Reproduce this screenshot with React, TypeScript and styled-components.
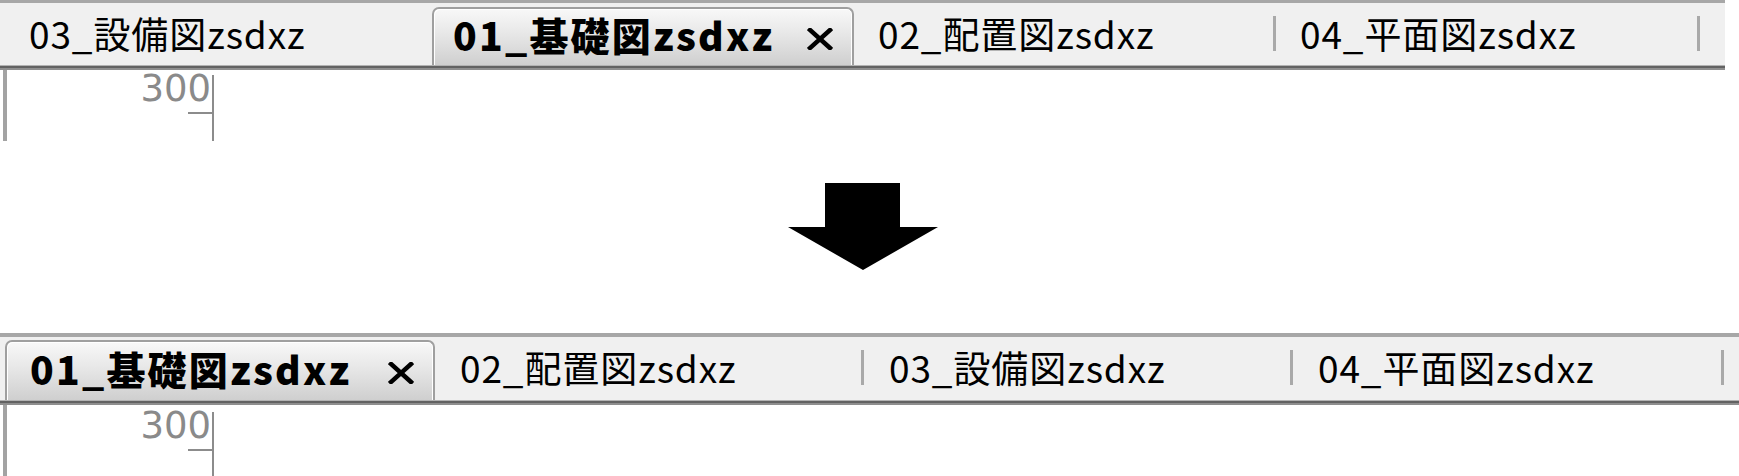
import React from "react";
import styled, { createGlobalStyle, css } from "styled-components";

const GlobalStyle = createGlobalStyle`
  html, body { margin: 0; padding: 0; background: #ffffff; }
  body { font-family: "Noto Sans CJK JP", "Noto Sans", sans-serif; overflow: hidden; }
`;

const Page = styled.div`
  width: 1739px;
  height: 476px;
  display: flex;
  flex-direction: column;
  background: #ffffff;
`;

const Window = styled.section<{ $width: number; $height: number; $gap?: number }>`
  width: ${(p) => p.$width}px;
  height: ${(p) => p.$height}px;
  margin-top: ${(p) => p.$gap ?? 0}px;
  display: flex;
  flex-direction: column;
  flex-shrink: 0;
`;

const TabStrip = styled.div<{ $h: number; $border: number; $padTop: number }>`
  box-sizing: border-box;
  height: ${(p) => p.$h}px;
  flex-shrink: 0;
  display: flex;
  align-items: stretch;
  padding: ${(p) => p.$padTop}px 0 5px 5px;
  background: #f0f0f0;
  border-top: ${(p) => p.$border}px solid #a7a7a7;
  box-shadow: inset 0 -2px 0 #8e8e8e, inset 0 -4px 0 #626262, inset 0 -5px 0 #b2b2b2;
`;

const Tab = styled.div<{ $w: number; $pad: number; $active?: boolean }>`
  box-sizing: border-box;
  width: ${(p) => p.$w}px;
  flex-shrink: 0;
  display: flex;
  align-items: center;
  padding: 0 0 5px ${(p) => p.$pad}px;
  ${(p) =>
    p.$active &&
    css`
      padding-right: 19px;
      border: 2px solid #9f9f9f;
      border-bottom: none;
      border-radius: 7px 7px 0 0;
      background: linear-gradient(#f8f8f8 0%, #e9e9e9 40%, #cfcfcf 100%);
      box-shadow: inset 1px 1px 0 #ffffff, inset -1px 0 0 #ffffff;
    `}
`;

const TabLabel = styled.span<{ $active?: boolean }>`
  font-family: "Noto Sans CJK JP", "Noto Sans", sans-serif;
  font-size: ${(p) => (p.$active ? 39 : 37)}px;
  font-weight: ${(p) => (p.$active ? 800 : 400)};
  letter-spacing: ${(p) => (p.$active ? 2.2 : 0.9)}px;
  line-height: 1;
  color: #000000;
  white-space: nowrap;
`;

const Separator = styled.div`
  width: 3px;
  height: 35px;
  margin-left: auto;
  background: #a9a9a9;
  flex-shrink: 0;
`;

const CloseButton = styled.span`
  margin-left: auto;
  margin-top: 9px;
  display: flex;
  align-items: center;
  justify-content: center;
  width: 26px;
  height: 22px;
  flex-shrink: 0;
`;

const Content = styled.div<{ $padTop: number }>`
  flex: 1;
  margin-left: 3px;
  border-left: 4px solid #a3a3a3;
  background: #ffffff;
  display: flex;
  align-items: stretch;
  padding-top: ${(p) => p.$padTop}px;
`;

const RulerLabel = styled.div`
  width: 205px;
  display: flex;
  flex-direction: column;
  align-items: flex-end;
`;

const RulerValue = styled.span`
  font-family: "DejaVu Sans", "Liberation Sans", sans-serif;
  font-size: 37px;
  line-height: 27px;
  color: #8a8a8a;
  padding-right: 1px;
`;

const RulerTick = styled.div`
  width: 24px;
  height: 2px;
  margin-top: 10px;
  background: #8c8c8c;
`;

const RulerLine = styled.div`
  width: 2px;
  background: #8c8c8c;
`;

const ArrowRow = styled.div`
  width: 1725px;
  height: 87px;
  margin-top: 42px;
  display: flex;
  justify-content: center;
  flex-shrink: 0;
`;

type TabData = { label: string; w: number; active?: boolean; sep?: boolean };

const CloseIcon = () => (
  <svg width="26" height="22" viewBox="0 0 26 22">
    <path d="M3 2 L23 20 M23 2 L3 20" stroke="#000" strokeWidth="4.5" strokeLinecap="square" />
  </svg>
);

const DownArrow = () => (
  <svg width="150" height="87" viewBox="0 0 150 87">
    <polygon points="37,0 112,0 112,44 150,44 75,87 0,44 37,44" fill="#000" />
  </svg>
);

function TabWindow(props: {
  width: number;
  height: number;
  gap?: number;
  stripH: number;
  border: number;
  padTop: number;
  pad: number;
  activePad: number;
  contentPad: number;
  tabs: TabData[];
}) {
  return (
    <Window $width={props.width} $height={props.height} $gap={props.gap}>
      <TabStrip $h={props.stripH} $border={props.border} $padTop={props.padTop}>
        {props.tabs.map((t) => (
          <Tab key={t.label} $w={t.w} $pad={t.active ? props.activePad : props.pad} $active={t.active}>
            <TabLabel $active={t.active}>{t.label}</TabLabel>
            {t.active ? (
              <CloseButton>
                <CloseIcon />
              </CloseButton>
            ) : t.sep ? (
              <Separator />
            ) : null}
          </Tab>
        ))}
      </TabStrip>
      <Content $padTop={props.contentPad}>
        <RulerLabel>
          <RulerValue>300</RulerValue>
          <RulerTick />
        </RulerLabel>
        <RulerLine />
      </Content>
    </Window>
  );
}

const before: TabData[] = [
  { label: "03_設備図zsdxz", w: 427 },
  { label: "01_基礎図zsdxz", w: 422, active: true },
  { label: "02_配置図zsdxz", w: 422, sep: true },
  { label: "04_平面図zsdxz", w: 424, sep: true },
];

const after: TabData[] = [
  { label: "01_基礎図zsdxz", w: 430, active: true },
  { label: "02_配置図zsdxz", w: 429, sep: true },
  { label: "03_設備図zsdxz", w: 429, sep: true },
  { label: "04_平面図zsdxz", w: 431, sep: true },
];

export default function App() {
  return (
    <Page>
      <GlobalStyle />
      <TabWindow
        width={1725}
        height={141}
        stripH={70}
        border={3}
        padTop={4}
        pad={24}
        activePad={19}
        contentPad={5}
        tabs={before}
      />
      <ArrowRow>
        <DownArrow />
      </ArrowRow>
      <TabWindow
        width={1739}
        height={143}
        gap={63}
        stripH={72}
        border={4}
        padTop={3}
        pad={25}
        activePad={23}
        contentPad={7}
        tabs={after}
      />
    </Page>
  );
}
